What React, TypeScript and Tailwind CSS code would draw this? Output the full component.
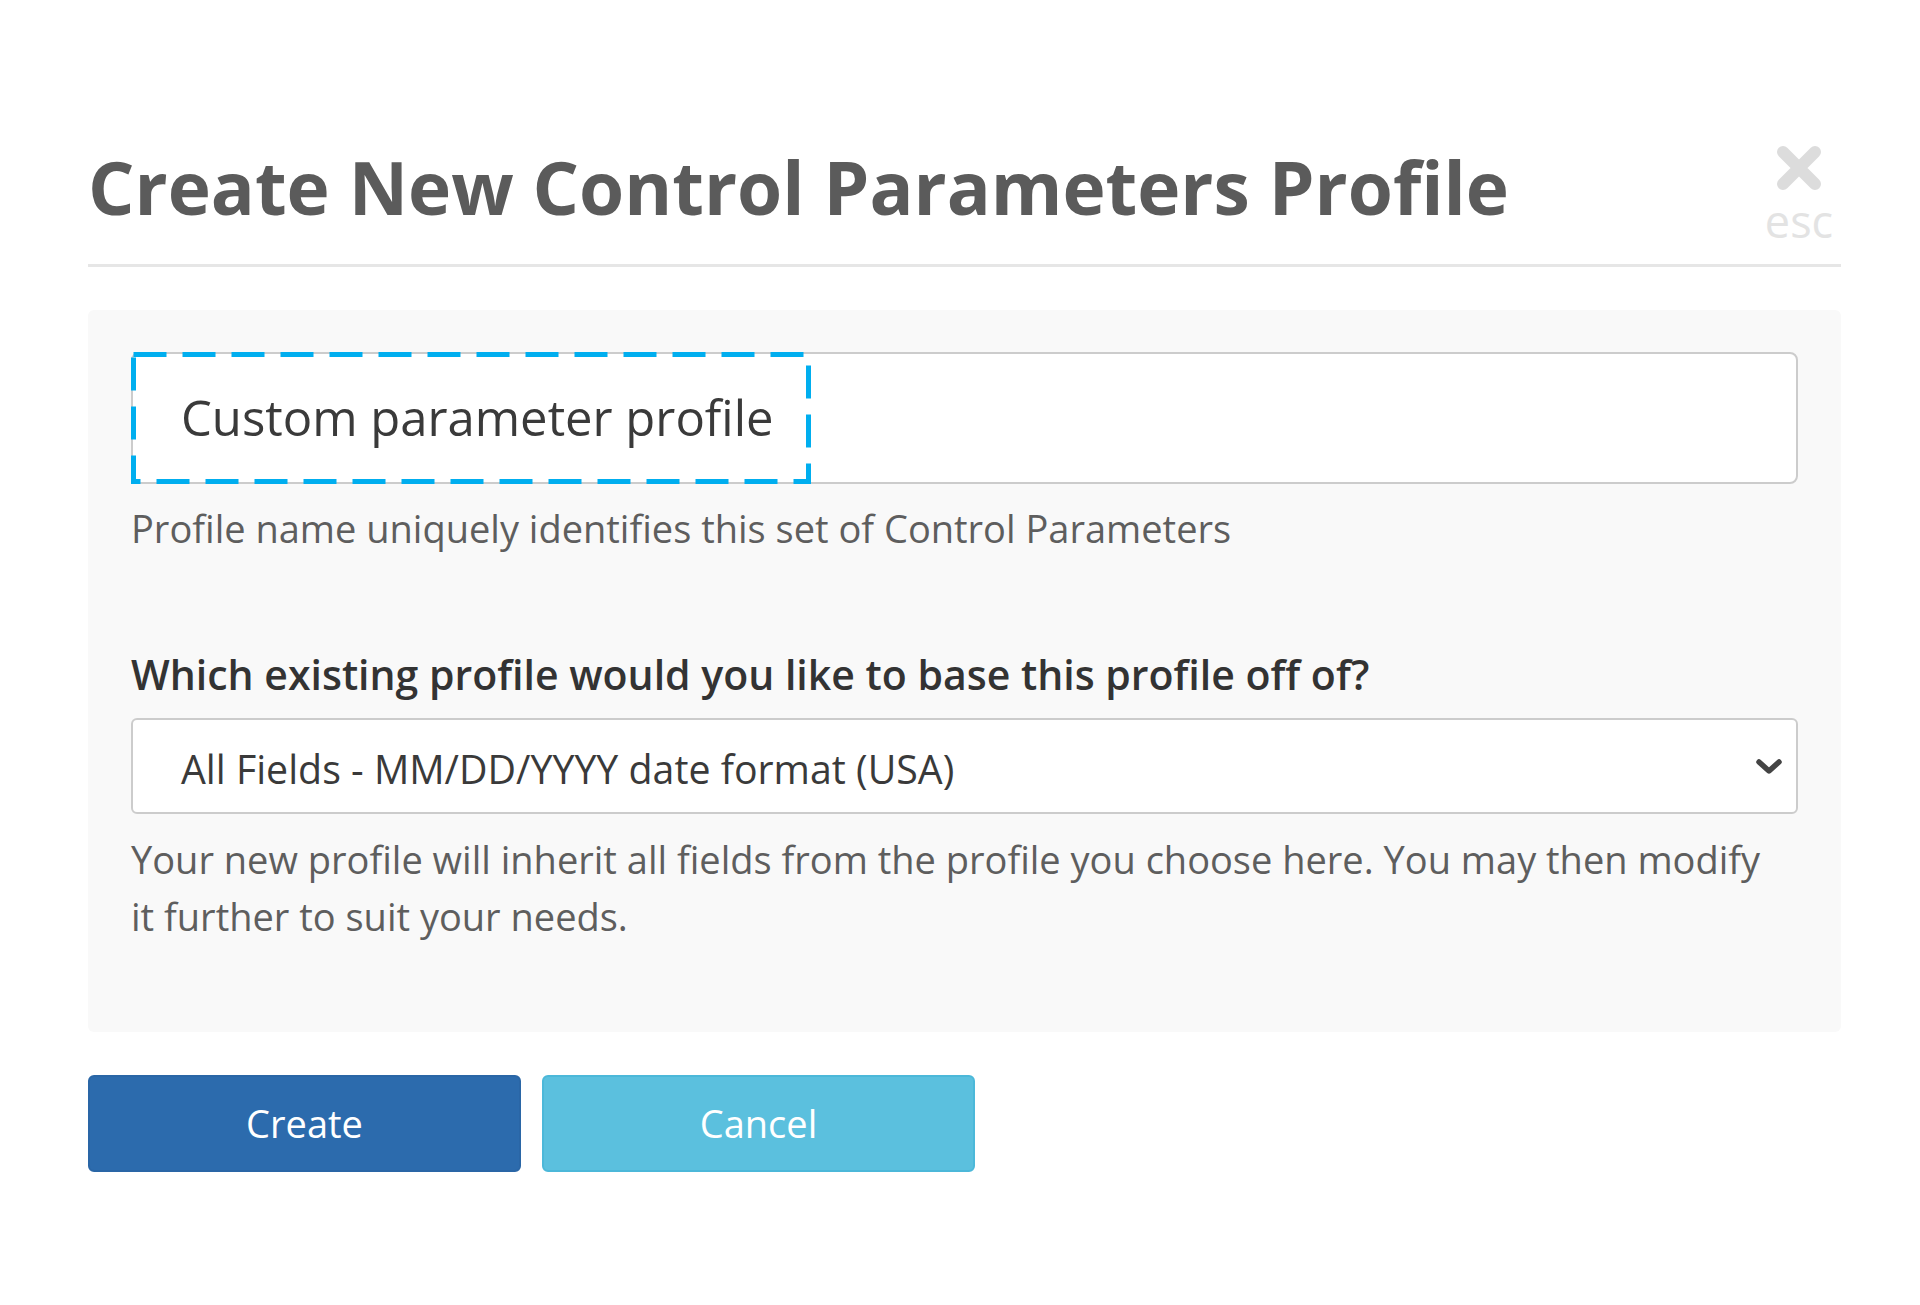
const font = { fontFamily: '"Open Sans", "Noto Sans", sans-serif' };

const CloseButton = () => (
  <button type="button" className="mb-[-40px] mr-[6px] mt-[-4px] flex w-[72px] flex-col items-center text-[#e0e0e0]">
    <svg width="46" height="44" viewBox="0 0 46 44" aria-hidden="true">
      <path d="M7 6 L39 38 M39 6 L7 38" stroke="#dcdcdc" strokeWidth="12" strokeLinecap="round" />
    </svg>
    <span className="mt-[8px] text-[45px] leading-[45px] text-[#e3e3e3]">esc</span>
  </button>
);

const FocusMarker = () => (
  <svg className="pointer-events-none absolute left-[-2px] top-[-2px]" width="680" height="132" aria-hidden="true">
    <rect x="2.5" y="2.5" width="675" height="127" fill="none" stroke="#00aeef" strokeWidth="5" strokeDasharray="33 16" />
  </svg>
);

const Chevron = () => (
  <svg className="absolute right-[14px] top-[38px]" width="26" height="18" viewBox="0 0 26 18" aria-hidden="true">
    <path d="M3 4 L13 13 L23 4" fill="none" stroke="#444444" strokeWidth="5.5" strokeLinecap="round" strokeLinejoin="round" />
  </svg>
);

export default function App() {
  return (
    <div className="min-h-screen bg-white" style={font}>
      <div className="ml-[88px] w-[1753px] pt-[150px]">
        <div className="flex h-[73px] items-start justify-between">
          <h1 className="text-[73px] font-bold leading-[73px] text-[#5b5b5b]">Create New Control Parameters Profile</h1>
          <CloseButton />
        </div>
        <div className="mt-[41px] h-[3px] bg-[#e6e6e6]" />

        <div className="mt-[43px] rounded-[6px] bg-[#f9f9f9] px-[43px] pb-[87px] pt-[42px]">
          <div className="relative flex h-[132px] items-center rounded-[8px] border-2 border-[#cccccc] bg-white pl-[48px] text-[49px] text-[#3a3a3a]">
            Custom parameter profile
            <FocusMarker />
          </div>
          <p className="mt-[19px] text-[38px] leading-[50px] text-[#5e5e5e]">
            Profile name uniquely identifies this set of Control Parameters
          </p>

          <p className="mt-[96px] text-[41px] font-semibold leading-[50px] text-[#333333]">
            Which existing profile would you like to base this profile off of?
          </p>
          <div className="relative mt-[19px] flex h-[96px] items-center rounded-[6px] border-2 border-[#cccccc] bg-white pl-[48px] pt-[6px] text-[39.3px] text-[#3a3a3a]">
            All Fields - MM/DD/YYYY date format (USA)
            <Chevron />
          </div>
          <p className="mt-[17px] pr-[30px] text-[38px] leading-[57px] text-[#5e5e5e]">
            Your new profile will inherit all fields from the profile you choose here. You may then modify it further to suit your needs.
          </p>
        </div>

        <div className="mt-[43px] flex gap-[21px]">
          <button type="button" className="h-[97px] w-[433px] rounded-[6px] border-2 border-[#2a66a6] bg-[#2c6bad] text-[38px] text-white">
            Create
          </button>
          <button type="button" className="h-[97px] w-[433px] rounded-[6px] border-2 border-[#4cb8d9] bg-[#5bc0de] text-[38px] text-white">
            Cancel
          </button>
        </div>
      </div>
    </div>
  );
}
